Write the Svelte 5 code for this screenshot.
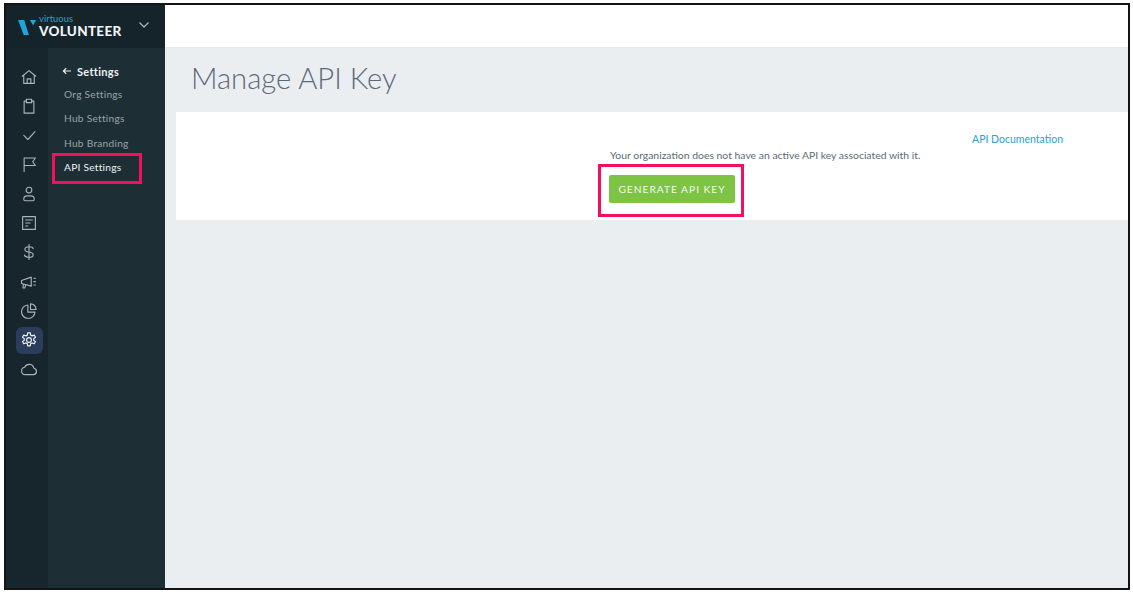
<script lang="ts">
  const navIcons = [
    { name: 'home', d: 'M3 11 12 3.500l9 7.500M5 9.500V20.500h14V9.500M9.500 20.500v-6h5v6' },
    { name: 'clipboard', d: 'M8.500 5.500H5.500v16h13v-16H15.500M8.500 3h7v4.500h-7z' },
    { name: 'check', d: 'M5 12.500 10.500 18 20 7.500' },
    { name: 'flag', d: 'M5.500 22V4h15l-3.500 5 3.500 5h-15' },
    { name: 'person', d: 'M12 3a3.800 3.800 0 1 1 0 7.600 3.800 3.800 0 0 1 0-7.600zM5 19c0-2.500 2-4.500 4.500-4.500h5c2.500 0 4.500 2 4.500 4.500 0 1.500-1 2-2 2H7c-1 0-2-.5-2-2z' },
    { name: 'form', d: 'M3.500 3.500h17v17h-17zM7.500 8h9M7.500 12h6M7.500 16h3' },
    { name: 'dollar', d: 'M17.500 7.500C17 5.500 14.500 5 12 5 9 5 6.500 6 6.500 8.500c0 5 11 2 11 7 0 2.500-2.500 3.500-5.500 3.500-3 0-5.500-1-6-3M12 2v20' },
    { name: 'megaphone', d: 'M2 10 15 5.500v12L2 14zM4.500 15l-.5 5h2.500l1-4M18.500 7h2M18.500 11.500h2M18.500 16h2' },
    { name: 'pie', d: 'M10.500 4a9 9 0 1 0 9.500 9.500h-9.500zM14 2.500a7.500 7.500 0 0 1 7.500 7.500H14z' },
    { name: 'cog', d: 'M10.300 2.500h3.400l.5 3 2 1 2.800-1.200 1.700 3-2.400 1.800v2.200l2.400 1.800-1.700 3-2.800-1.200-2 1-.5 3h-3.400l-.5-3-2-1-2.800 1.200-1.700-3 2.400-1.800v-2.200L3.300 8.300l1.700-3 2.800 1.200 2-1zM12 8.800a3.200 3.200 0 1 1 0 6.400 3.200 3.200 0 0 1 0-6.400z' },
    { name: 'cloud', d: 'M7 19.500a5 5 0 0 1-.8-9.900A6.500 6.500 0 0 1 18.500 11a4.300 4.300 0 0 1-.5 8.500z' }
  ];

  const subLinks = ['Org Settings', 'Hub Settings', 'Hub Branding', 'API Settings'];
</script>

<div class="frame">
  <aside class="sidebar">
    <header class="brand">
      <svg class="logo" viewBox="0 0 20 18" aria-hidden="true">
        <path d="M0 1h6.500l5 16H6z" fill="#1fa5dc" />
        <path d="M12.500 1h6.500l-3 6z" fill="#1fa5dc" />
      </svg>
      <div class="wordmark">
        <span class="wm-top">virtuous</span>
        <span class="wm-main">VOLUNTEER</span>
      </div>
      <svg class="caret" viewBox="0 0 12 8" aria-hidden="true">
        <path d="M1.500 1.500 6 6l4.500-4.500" />
      </svg>
    </header>

    <div class="sidebar-body">
      <nav class="rail">
        {#each navIcons as icon}
          <span class="rail-item" class:active={icon.name === 'cog'}>
            <svg viewBox="0 0 24 24" aria-hidden="true"><path d={icon.d} /></svg>
          </span>
        {/each}
      </nav>

      <nav class="subnav">
        <div class="sub-title">
          <svg viewBox="0 0 12 10" aria-hidden="true"><path d="M11 5H1.500M5 1.500 1.500 5 5 8.500" /></svg>
          <span>Settings</span>
        </div>
        {#each subLinks as link}
          <div class="sub-link" class:current={link === 'API Settings'}>{link}</div>
        {/each}
      </nav>
    </div>
  </aside>

  <main class="main">
    <div class="topbar"></div>
    <h1>Manage API Key</h1>
    <section class="card">
      <div class="doc-row"><span class="doc-link">API Documentation</span></div>
      <div class="card-body">
        <p>Your organization does not have an active API key associated with it.</p>
        <button class="generate">GENERATE API KEY</button>
      </div>
    </section>
  </main>

  <!-- annotation boxes drawn over the screenshot -->
  <div class="callout callout-nav"></div>
  <div class="callout callout-btn"></div>
</div>

<style>
  :global(body) {
    margin: 0;
    background: #fff;
  }

  .frame {
    position: relative;
    box-sizing: border-box;
    display: flex;
    width: 1126px;
    height: 587px;
    margin: 3px 0 0 4px;
    border: 2px solid #141414;
    background: #ebeef1;
    overflow: hidden;
    font-family: Lato, "Open Sans", sans-serif;
  }

  .sidebar {
    flex: none;
    display: flex;
    flex-direction: column;
    width: 159px;
    background: #1e2e35;
  }
  .brand {
    flex: none;
    display: flex;
    align-items: center;
    height: 43px;
    padding-left: 12px;
    box-sizing: border-box;
    background: #15232b;
  }
  .logo {
    width: 19px;
    height: 17px;
    margin-top: 2px;
  }
  .wordmark {
    display: flex;
    flex-direction: column;
    margin-left: 2px;
  }
  .wm-top {
    height: 8px;
    margin-top: -2px;
    font-size: 9.500px;
    line-height: 8px;
    color: #1fa5dc;
  }
  .wm-main {
    height: 11px;
    margin-top: 3px;
    font-size: 13.500px;
    font-weight: 900;
    line-height: 11px;
    letter-spacing: 0.300px;
    color: #eef2f4;
  }
  .caret {
    width: 12px;
    height: 8px;
    margin-left: 16px;
    margin-top: -4px;
    fill: none;
    stroke: #a8b4ba;
    stroke-width: 1.300;
  }

  .sidebar-body {
    flex: 1;
    display: flex;
  }
  .rail {
    flex: none;
    display: flex;
    flex-direction: column;
    align-items: center;
    gap: 2.300px;
    width: 42px;
    padding: 15px 0 0 4px;
    box-sizing: border-box;
    background: #17252c;
  }
  .rail-item {
    display: flex;
    align-items: center;
    justify-content: center;
    width: 27px;
    height: 27px;
    border-radius: 6px;
    color: #a9b5ba;
  }
  .rail-item.active {
    background: #2a3d5a;
    color: #f2f5f7;
  }
  .rail-item svg {
    width: 18px;
    height: 18px;
    fill: none;
    stroke: currentColor;
    stroke-width: 1.500;
    stroke-linejoin: round;
    stroke-linecap: round;
  }

  .subnav {
    flex: 1;
    padding: 16px 0 0 16px;
  }
  .sub-title {
    display: flex;
    align-items: center;
    gap: 5px;
    height: 14px;
    margin-left: -2px;
    margin-bottom: 9px;
    font-size: 11px;
    font-weight: 700;
    letter-spacing: 0.300px;
    color: #eef2f4;
  }
  .sub-title svg {
    width: 10px;
    height: 8px;
    fill: none;
    stroke: #eef2f4;
    stroke-width: 1.500;
  }
  .sub-link {
    height: 24.300px;
    line-height: 14px;
    font-size: 10.200px;
    letter-spacing: 0.250px;
    color: #97a4aa;
  }
  .sub-link.current {
    color: #f1f4f6;
  }

  .main {
    flex: 1;
    min-width: 0;
  }
  .topbar {
    height: 43px;
    background: #fff;
    border-bottom: 1px solid #e6e9ec;
    box-sizing: border-box;
  }
  h1 {
    margin: 0;
    height: 64px;
    padding-left: 26px;
    font-size: 29.200px;
    font-weight: 300;
    line-height: 60px;
    color: #5b6a78;
  }
  .card {
    box-sizing: border-box;
    height: 108px;
    margin-left: 11px;
    padding-top: 20px;
    background: #fff;
  }
  .doc-row {
    display: flex;
    justify-content: flex-end;
    padding-right: 65px;
    height: 14px;
    line-height: 14px;
  }
  .doc-link {
    font-size: 10.500px;
    color: #2a9fd6;
  }
  .card-body {
    padding: 2px 0 0 433px;
  }
  .card-body p {
    margin: 0 0 13px 1px;
    height: 14px;
    line-height: 14px;
    font-size: 10.400px;
    color: #5b6a72;
  }
  .generate {
    display: block;
    width: 126px;
    height: 28px;
    padding: 0;
    border: 0;
    border-radius: 2px;
    background: #7dc344;
    color: #f6fbf1;
    font-family: inherit;
    font-size: 10.200px;
    font-weight: 400;
    letter-spacing: 1px;
  }

  .callout {
    position: absolute;
    box-sizing: border-box;
    border: 3px solid #f3115f;
  }
  .callout-nav {
    left: 46px;
    top: 148px;
    width: 90px;
    height: 31px;
  }
  .callout-btn {
    left: 592px;
    top: 159px;
    width: 146px;
    height: 53px;
  }
</style>
